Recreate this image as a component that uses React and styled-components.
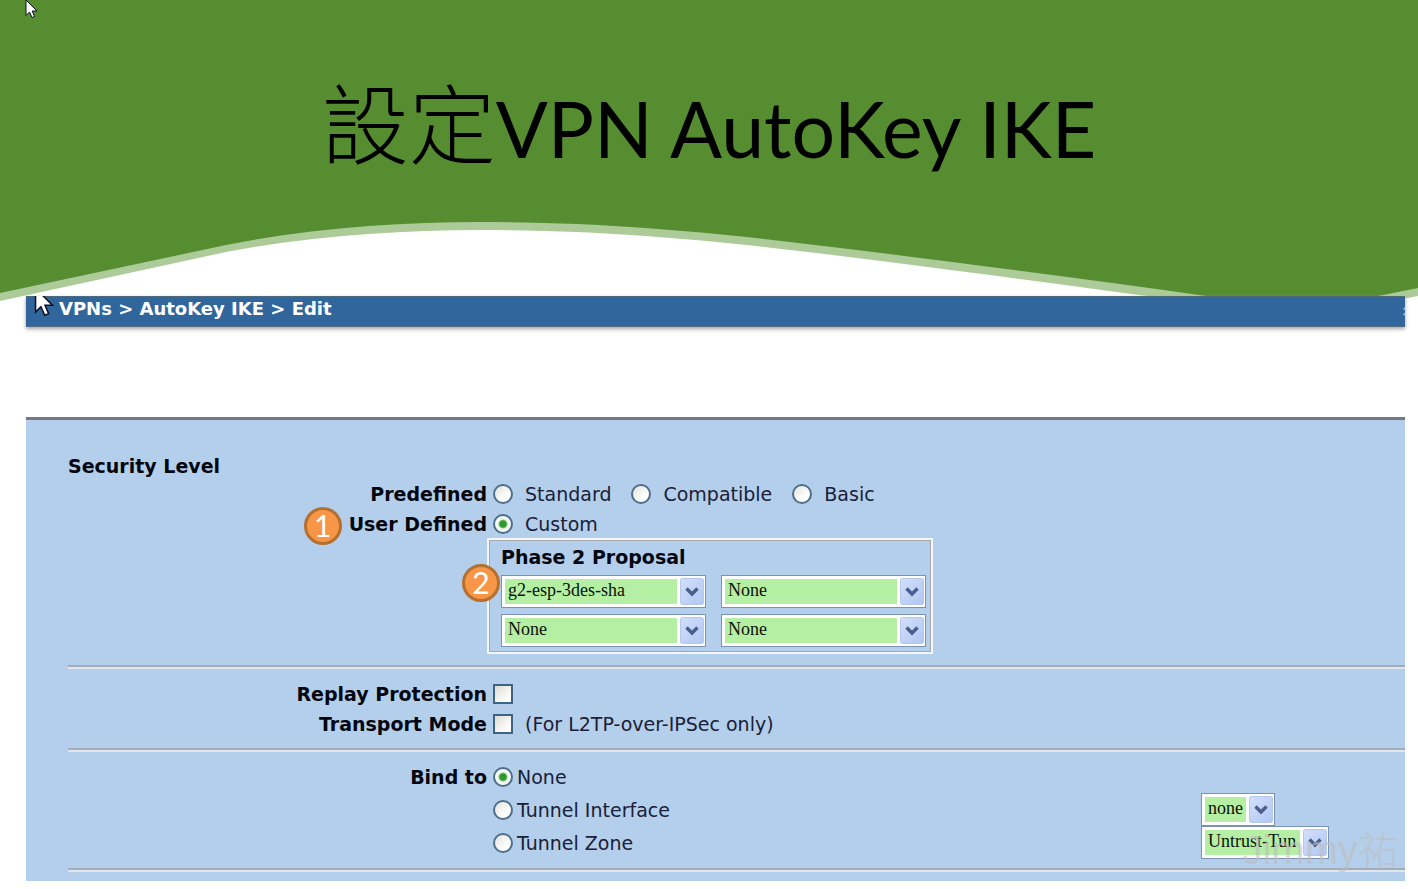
import styled, { createGlobalStyle } from 'styled-components';

const GlobalStyle = createGlobalStyle`
  * {
    box-sizing: border-box;
  }

  body {
    margin: 0;
    background-color: #ffffff;
    font-family: 'DejaVu Sans', sans-serif;
    font-size: 19px;
    color: #1b2036;
  }
`;

const Slide = styled.main`
  position: relative;
  padding-bottom: 8px;
`;

const Hero = styled.header`
  position: relative;
  height: 296px;
  padding-top: 64px;
  text-align: center;
`;

const Wave = styled.svg`
  position: absolute;
  top: 0;
  left: 0;
  width: 100%;
  height: 304px;
`;

const SlideTitle = styled.h1`
  position: relative;
  margin: 0;
  font-family: Lato, 'Noto Sans CJK TC', sans-serif;
  font-size: 77px;
  font-weight: 400;
  line-height: 112px;
  color: #000000;
`;

const TitleHan = styled.span`
  font-family: 'Noto Sans CJK TC', sans-serif;
  font-size: 87px;
  font-weight: 300;
`;

const Cursor = styled.svg`
  position: absolute;
  top: ${({ $top }) => $top};
  left: ${({ $left }) => $left};
`;

const Panel = styled.section`
  position: relative;
  margin: 0 13px 0 26px;
`;

const TitleBar = styled.div`
  position: relative;
  height: 31px;
  padding-left: 33px;
  overflow: hidden;
  border-top: 1px solid #4d6a7c;
  border-bottom: 1px solid #566a86;
  background-color: #31669c;
  box-shadow: 0 2px 4px #a79f9f;
  font-size: 18px;
  font-weight: 700;
  line-height: 24px;
  color: #ffffff;
`;

const BarMark = styled.svg`
  position: absolute;
  top: 10px;
  right: 0;
`;

const Blank = styled.div`
  height: 90px;
`;

const Form = styled.form`
  padding: 34px 0 9px 42px;
  border-top: 3px solid #737a82;
  background-color: #b3cfeb;
`;

const SectionTitle = styled.h2`
  margin: 0;
  font-size: 19px;
  line-height: 25px;
  color: #04060f;
`;

const Row = styled.div`
  display: grid;
  grid-template-columns: 419px 1fr;
  column-gap: 6px;
  align-items: center;
  min-height: ${({ $tall }) => ($tall ? '32px' : '30px')};
`;

const RowLabel = styled.div`
  position: relative;
  justify-self: end;
  font-weight: 700;
  color: #04060f;
`;

const Options = styled.div`
  display: flex;
  align-items: center;
  gap: 20px;
`;

const BindOptions = styled.div`
  display: grid;
  grid-template-columns: 1fr 204px;
  align-items: center;
`;

const Option = styled.label`
  display: flex;
  align-items: center;
  gap: ${({ $tight }) => ($tight ? '4px' : '12px')};
`;

const Radio = styled.input`
  appearance: none;
  width: 20px;
  height: 20px;
  margin: 0;
  border: 2px solid #4d6f8c;
  border-radius: 50%;
  background: linear-gradient(135deg, #e2e2dc, #ffffff 70%);

  &:checked {
    background: radial-gradient(circle, #2f9a2c 3px, #7cc777 4px, #f6f8f4 5px);
  }
`;

const Check = styled.input`
  appearance: none;
  width: 20px;
  height: 20px;
  margin: 0;
  border: 2px solid #3f6482;
  background: linear-gradient(135deg, #dcdcd6, #ffffff 80%);

  &:checked {
    background: #2f9a2c;
  }
`;

const Proposal = styled.fieldset`
  position: relative;
  width: 446px;
  margin: -1px 0 0 419px;
  padding: 4px 5px 5px 12px;
  border: 2px solid #f4f6f8;
  outline: 1px solid #a5a8ac;
  outline-offset: -3px;
`;

const ProposalTitle = styled.div`
  margin-bottom: 4px;
  font-weight: 700;
  line-height: 27px;
  color: #04060f;
`;

const ProposalGrid = styled.div`
  display: grid;
  grid-template-columns: 1fr 1fr;
  gap: 6px 15px;
`;

const SelectBox = styled.span`
  position: relative;
  display: block;
  width: ${({ $width }) => $width || '100%'};
`;

const SelectInput = styled.select`
  appearance: none;
  display: block;
  width: 100%;
  height: 33px;
  padding: 0 28px 4px 6px;
  border: 1px solid #7c92b2;
  border-radius: 0;
  background: linear-gradient(#b4efa4, #b4efa4) 3px 3px / calc(100% - 31px) 25px no-repeat #ffffff;
  font-family: 'Liberation Serif', serif;
  font-size: 18px;
  color: #0a120a;
`;

const SelectArrow = styled.svg`
  position: absolute;
  top: 3px;
  right: 2px;
  pointer-events: none;
`;

const Divider = styled.hr`
  height: 4px;
  margin: ${({ $space }) => $space};
  border: none;
  border-top: 2px solid #a3adb9;
  border-bottom: 2px solid #dfe6ee;
`;

const Badge = styled.span`
  position: absolute;
  top: ${({ $top }) => $top};
  left: ${({ $left }) => $left};
  width: 38px;
  height: 38px;
  border: 3px solid #b5702f;
  border-radius: 50%;
  background-color: #f79646;
  font-family: Lato, sans-serif;
  font-size: 30px;
  font-weight: 400;
  line-height: 30px;
  text-align: center;
  color: #ffffff;
`;

const Watermark = styled.div`
  position: absolute;
  right: 20px;
  bottom: 15px;
  font-family: 'Liberation Sans', 'Noto Sans CJK TC', sans-serif;
  font-size: 40px;
  line-height: 48px;
  color: rgba(190, 190, 190, 0.6);
  pointer-events: none;
`;

const WatermarkHan = styled.span`
  font-family: 'Noto Sans CJK TC', sans-serif;
  font-weight: 300;
`;

function Pointer({ top, left, cut = 0 }) {
  return (
    <Cursor $top={top} $left={left} width={cut ? 20 : 13} height={cut ? 20 : 19} viewBox={`0 ${cut} 13 ${cut ? 13 : 19}`} aria-hidden="true">
      <path
        d="M1 0V15.5L4.5 12L7 17.5L9.5 16.5L7.2 11H12Z"
        fill="#ffffff"
        stroke="#0b1020"
        strokeWidth="1"
      />
    </Cursor>
  );
}

function Select({ label, width, options }) {
  return (
    <SelectBox $width={width}>
      <SelectInput aria-label={label}>
        {options.map((option) => (
          <option key={option}>{option}</option>
        ))}
      </SelectInput>
      <SelectArrow width="24" height="27" viewBox="0 0 24 27" aria-hidden="true">
        <defs>
          <linearGradient id="arrowFace" x1="0" y1="0" x2="1" y2="1">
            <stop offset="0" stopColor="#d3e0fb" />
            <stop offset="1" stopColor="#b0c6f3" />
          </linearGradient>
        </defs>
        <rect x="0.5" y="0.5" width="23" height="26" rx="2" fill="url(#arrowFace)" stroke="#b5c7ea" />
        <path d="M6.5 10.5L12 16L17.5 10.5" fill="none" stroke="#49608c" strokeWidth="3.4" />
      </SelectArrow>
    </SelectBox>
  );
}

export default function App() {
  return (
    <>
      <GlobalStyle />
      <Slide>
        <Hero>
          <Wave viewBox="0 0 1418 304" preserveAspectRatio="none" aria-hidden="true">
            <path
              d="M0 0V301L226 252C310 236 400 230 480 230C640 230 760 246 889 262C1000 276 1100 290 1206 304H1378L1418 296V0Z"
              fill="#adcb98"
            />
            <path
              d="M0 0V293L226 245C310 228 400 222 480 222C640 222 760 238 889 254C1000 268 1100 281 1206 296C1280 304 1330 304 1378 296L1418 288V0Z"
              fill="#568d31"
            />
          </Wave>
          <SlideTitle>
            <TitleHan>設定</TitleHan>VPN AutoKey IKE
          </SlideTitle>
          <Pointer top="0" left="25px" />
        </Hero>

        <Panel>
          <TitleBar>
            VPNs &gt; AutoKey IKE &gt; Edit
            <BarMark width="3" height="10" viewBox="0 0 3 10" aria-hidden="true">
              <path d="M3 0L1 2L3 3ZM3 6L1 7L3 9Z" fill="#9fc6e6" />
            </BarMark>
          </TitleBar>
          <Pointer top="0" left="8px" cut={5} />
          <Blank />

          <Form>
            <SectionTitle>Security Level</SectionTitle>
            <Row>
              <RowLabel>Predefined</RowLabel>
              <Options>
                <Option>
                  <Radio type="radio" name="level" />
                  Standard
                </Option>
                <Option>
                  <Radio type="radio" name="level" />
                  Compatible
                </Option>
                <Option>
                  <Radio type="radio" name="level" />
                  Basic
                </Option>
              </Options>
            </Row>
            <Row>
              <RowLabel>
                <Badge $top="-6px" $left="-45px">1</Badge>
                User Defined
              </RowLabel>
              <Option>
                <Radio type="radio" name="level" defaultChecked />
                Custom
              </Option>
            </Row>
            <Proposal aria-label="Phase 2 Proposal">
              <ProposalTitle>Phase 2 Proposal</ProposalTitle>
              <ProposalGrid>
                <Select label="Proposal 1" options={['g2-esp-3des-sha', 'None']} />
                <Select label="Proposal 2" options={['None']} />
                <Select label="Proposal 3" options={['None']} />
                <Select label="Proposal 4" options={['None']} />
              </ProposalGrid>
              <Badge $top="24px" $left="-27px">2</Badge>
            </Proposal>

            <Divider $space="11px 0 10px" />
            <Row>
              <RowLabel as="label" htmlFor="replay">Replay Protection</RowLabel>
              <Check type="checkbox" id="replay" />
            </Row>
            <Row>
              <RowLabel>Transport Mode</RowLabel>
              <Option>
                <Check type="checkbox" />
                (For L2TP-over-IPSec only)
              </Option>
            </Row>

            <Divider $space="9px 0" />
            <Row $tall>
              <RowLabel>Bind to</RowLabel>
              <Option $tight>
                <Radio type="radio" name="bind" defaultChecked />
                None
              </Option>
            </Row>
            <Row $tall>
              <span />
              <BindOptions>
                <Option $tight>
                  <Radio type="radio" name="bind" />
                  Tunnel Interface
                </Option>
                <Select label="Tunnel Interface" width="74px" options={['none']} />
              </BindOptions>
            </Row>
            <Row $tall>
              <span />
              <BindOptions>
                <Option $tight>
                  <Radio type="radio" name="bind" />
                  Tunnel Zone
                </Option>
                <Select label="Tunnel Zone" width="128px" options={['Untrust-Tun']} />
              </BindOptions>
            </Row>
            <Divider $space="9px 0 0" />
          </Form>
        </Panel>
        <Watermark>
          Jimmy<WatermarkHan>祐</WatermarkHan>
        </Watermark>
      </Slide>
    </>
  );
}
